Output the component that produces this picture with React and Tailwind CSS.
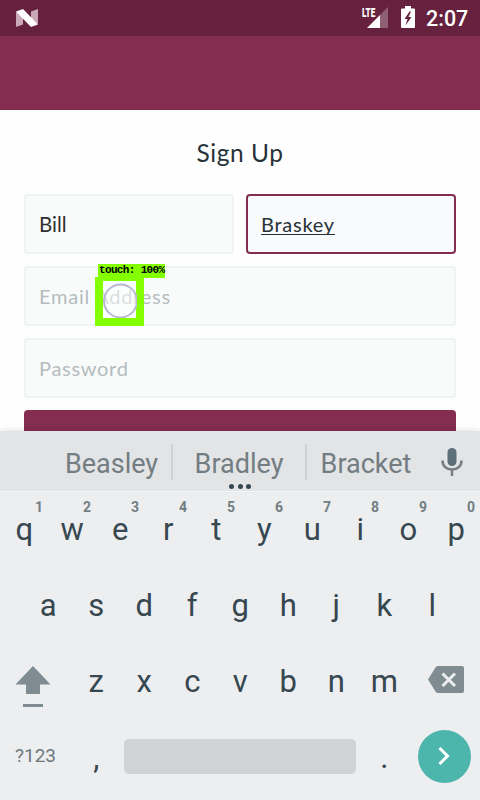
import React from "react";

const topRow = ["q", "w", "e", "r", "t", "y", "u", "i", "o", "p"];
const middleRow = ["a", "s", "d", "f", "g", "h", "j", "k", "l"];
const bottomRow = ["z", "x", "c", "v", "b", "n", "m"];

function Key({ label, hint }) {
  return (
    <div className="relative flex h-[76px] w-12 items-center justify-center pl-[0.5px] text-[31px] leading-9 text-[#37474f]">
      <span>{label}</span>
      {hint && (
        <span className="absolute left-[35px] top-[7px] text-[14px] font-bold leading-4 text-[#727e84]">
          {hint}
        </span>
      )}
    </div>
  );
}

function StatusBar() {
  return (
    <div className="flex h-9 items-start bg-[#65213d] text-white">
      <svg className="ml-4 mt-[9px] h-[18px] w-[22px]" viewBox="0 0 22 18">
        <path d="M0 3L7 5V15.5L0 18Z M22 0V15L15 12V2.5Z" fill="#c9a9b5" />
        <path d="M0 2.500L7 0L22 15.500L15 18Z" fill="#fff" />
      </svg>
      <div className="ml-auto flex items-start">
        <div className="relative mt-[6px] h-[22px] w-[27px]">
          <svg className="h-[22px] w-[27px]" viewBox="0 0 27 22">
            <path d="M26 1V22H18V9Z" fill="#8f5f73" />
            <path d="M5 22L18 9V22Z" fill="#fff" />
          </svg>
          <span className="absolute left-0 top-0 origin-left scale-x-[0.6] text-[13.5px] font-black leading-[13px]">
            LTE
          </span>
        </div>
        <svg className="ml-3 mt-[6px] h-[22px] w-[14px]" viewBox="0 0 14 22">
          <path d="M4 0H10V2.5H13Q14 2.5 14 3.5V21Q14 22 13 22H1Q0 22 0 21V3.5Q0 2.5 1 2.5H4Z" fill="#fff" />
          <path d="M8.5 5.5L3.5 13H6.5L4.5 19.5L10.5 11H7.5L10 5.5Z" fill="#65213d" />
        </svg>
        <span className="ml-[11px] mr-3 mt-[7px] w-[42px] whitespace-nowrap text-[21.5px] font-medium leading-6">
          2:07
        </span>
      </div>
    </div>
  );
}

function SignUpForm() {
  return (
    <div className="flex h-[321px] flex-col gap-3 overflow-hidden px-6 text-[20px] font-[Lato,sans-serif]">
      <h1 className="mb-[13px] mt-[28px] h-[31px] shrink-0 text-center text-[24.5px] leading-[30px] tracking-[0.55px] text-[#263238]">
        Sign Up
      </h1>
      <div className="flex gap-3">
        <div className="flex h-[60px] w-[210px] items-center rounded border-2 border-[#f0f3f4] bg-[#f9fbfb] pl-[13px] pt-px text-[20.5px] text-[#303030]">
          Bill
        </div>
        <div className="flex h-[60px] w-[210px] items-center rounded border-2 border-[#842d50] bg-[#f9fafb] pl-[13px] text-[#263238]">
          <span className="border-b border-[#263238] leading-[20px] tracking-[0.75px]">Braskey</span>
        </div>
      </div>
      <div className="relative flex h-[60px] shrink-0 items-center rounded border-2 border-[#f0f3f4] bg-[#f9fbfb] pl-[13px] tracking-[0.75px] text-[#b4bcbf]">
        Email Address
        <div className="absolute left-[69px] top-[9px] h-[49px] w-[49px] border-x-[8px] border-b-[8px] border-t-[4px] border-[#84ff00] bg-white/50">
          <svg className="absolute left-0 top-0 h-[37px] w-[34px]" viewBox="0 0 34 37">
            <circle cx="17.5" cy="20" r="16.5" fill="none" stroke="#b8b8d2" strokeWidth="2" />
          </svg>
        </div>
        <div className="absolute left-[72px] top-[-4px] h-[14px] w-[67px] whitespace-nowrap bg-[#84ff00] pl-px font-['Liberation_Mono',monospace] text-[11px] font-bold leading-[13px] tracking-[-0.65px] text-black">
          touch: 100%
        </div>
      </div>
      <div className="flex h-[60px] shrink-0 items-center rounded border-2 border-[#f0f3f4] bg-[#f9fbfb] pl-[13px] tracking-[0.7px] text-[#b4bcbf]">
        Password
      </div>
      <div className="h-[60px] shrink-0 rounded bg-[#842d50]" />
    </div>
  );
}

function Suggestions() {
  return (
    <div className="relative flex h-[61px] items-center border-b border-[#f3f5f6] bg-[#e2e4e6] text-[27px] text-[#737d82] shadow-[0_-2px_5px_rgba(0,0,0,0.08)]">
      <span className="ml-[52px] w-[119px] pt-[7px] text-center">Beasley</span>
      <span className="mt-px h-9 w-[2px] bg-[#cfd2d4]" />
      <span className="w-[132px] pt-[7px] text-center">Bradley</span>
      <span className="mt-px h-9 w-[2px] bg-[#cfd2d4]" />
      <span className="w-[118px] pt-[7px] text-center">Bracket</span>
      <svg className="ml-[16px] mt-px h-[30px] w-[22px]" viewBox="0 0 22 30">
        <rect x="6.5" y="1" width="9" height="18" rx="4.5" fill="#5d707a" />
        <path d="M1.5 13.5C1.5 19 5.5 22.5 11 22.5S20.5 19 20.5 13.5M11 22.5V29" fill="none" stroke="#737d82" strokeWidth="2.5" />
      </svg>
      <span className="absolute left-[229px] top-[53px] flex gap-[3.5px]">
        <i className="h-[5px] w-[5px] rounded-full bg-[#37474f]" />
        <i className="h-[5px] w-[5px] rounded-full bg-[#37474f]" />
        <i className="h-[5px] w-[5px] rounded-full bg-[#37474f]" />
      </span>
    </div>
  );
}

function Keyboard() {
  return (
    <div className="h-[369px] bg-[#eceef0]">
      <Suggestions />
      <div className="flex">
        {topRow.map((k, i) => (
          <Key key={k} label={k} hint={String((i + 1) % 10)} />
        ))}
      </div>
      <div className="flex justify-center">
        {middleRow.map((k) => (
          <Key key={k} label={k} />
        ))}
      </div>
      <div className="flex">
        <div className="flex w-[72px] justify-start pl-[15px] pt-[21px]">
          <svg className="h-[43px] w-[36px]" viewBox="0 0 36 43">
            <path d="M18 1L35.5 19.5H25V29H11V19.5H0.5Z" fill="#7f8c92" />
            <path d="M8 39H28V42H8Z" fill="#7f8c92" />
          </svg>
        </div>
        {bottomRow.map((k) => (
          <Key key={k} label={k} />
        ))}
        <div className="flex w-[72px] pl-5 pt-[22px]">
          <svg className="h-[27px] w-9" viewBox="0 0 36 27">
            <path d="M10 0H34Q36 0 36 2V25Q36 27 34 27H10Q8.5 27 7.5 25.5L0 13.5L7.5 1.5Q8.5 0 10 0Z" fill="#7f8c92" />
            <path d="M14.5 7.5L27 20M27 7.5L14.5 20" stroke="#eceef0" strokeWidth="3" />
          </svg>
        </div>
      </div>
      <div className="flex h-[72px] items-center">
        <div className="w-[72px] pl-[15px] pt-px text-[19px] text-[#6d787d]">?123</div>
        <div className="pt-[3px]">
          <Key label="," />
        </div>
        <div className="ml-1 h-[35px] w-[232px] rounded-[5px] bg-[#d0d3d6]" />
        <div className="ml-1 pt-[3px]">
          <Key label="." />
        </div>
        <div className="ml-[10px] flex h-[53px] w-[53px] items-center justify-center rounded-full bg-[#4db6ac] pr-px">
          <svg className="h-[18px] w-[12px]" viewBox="0 0 12 18">
            <path d="M1.5 1L9.5 9L1.5 17" fill="none" stroke="#fff" strokeWidth="3" />
          </svg>
        </div>
      </div>
    </div>
  );
}

export default function App() {
  return (
    <div className="h-[800px] w-[480px] overflow-hidden bg-[#fefefe] font-[Roboto,sans-serif]">
      <StatusBar />
      <div className="h-[74px] bg-[#842d50]" />
      <SignUpForm />
      <Keyboard />
    </div>
  );
}
